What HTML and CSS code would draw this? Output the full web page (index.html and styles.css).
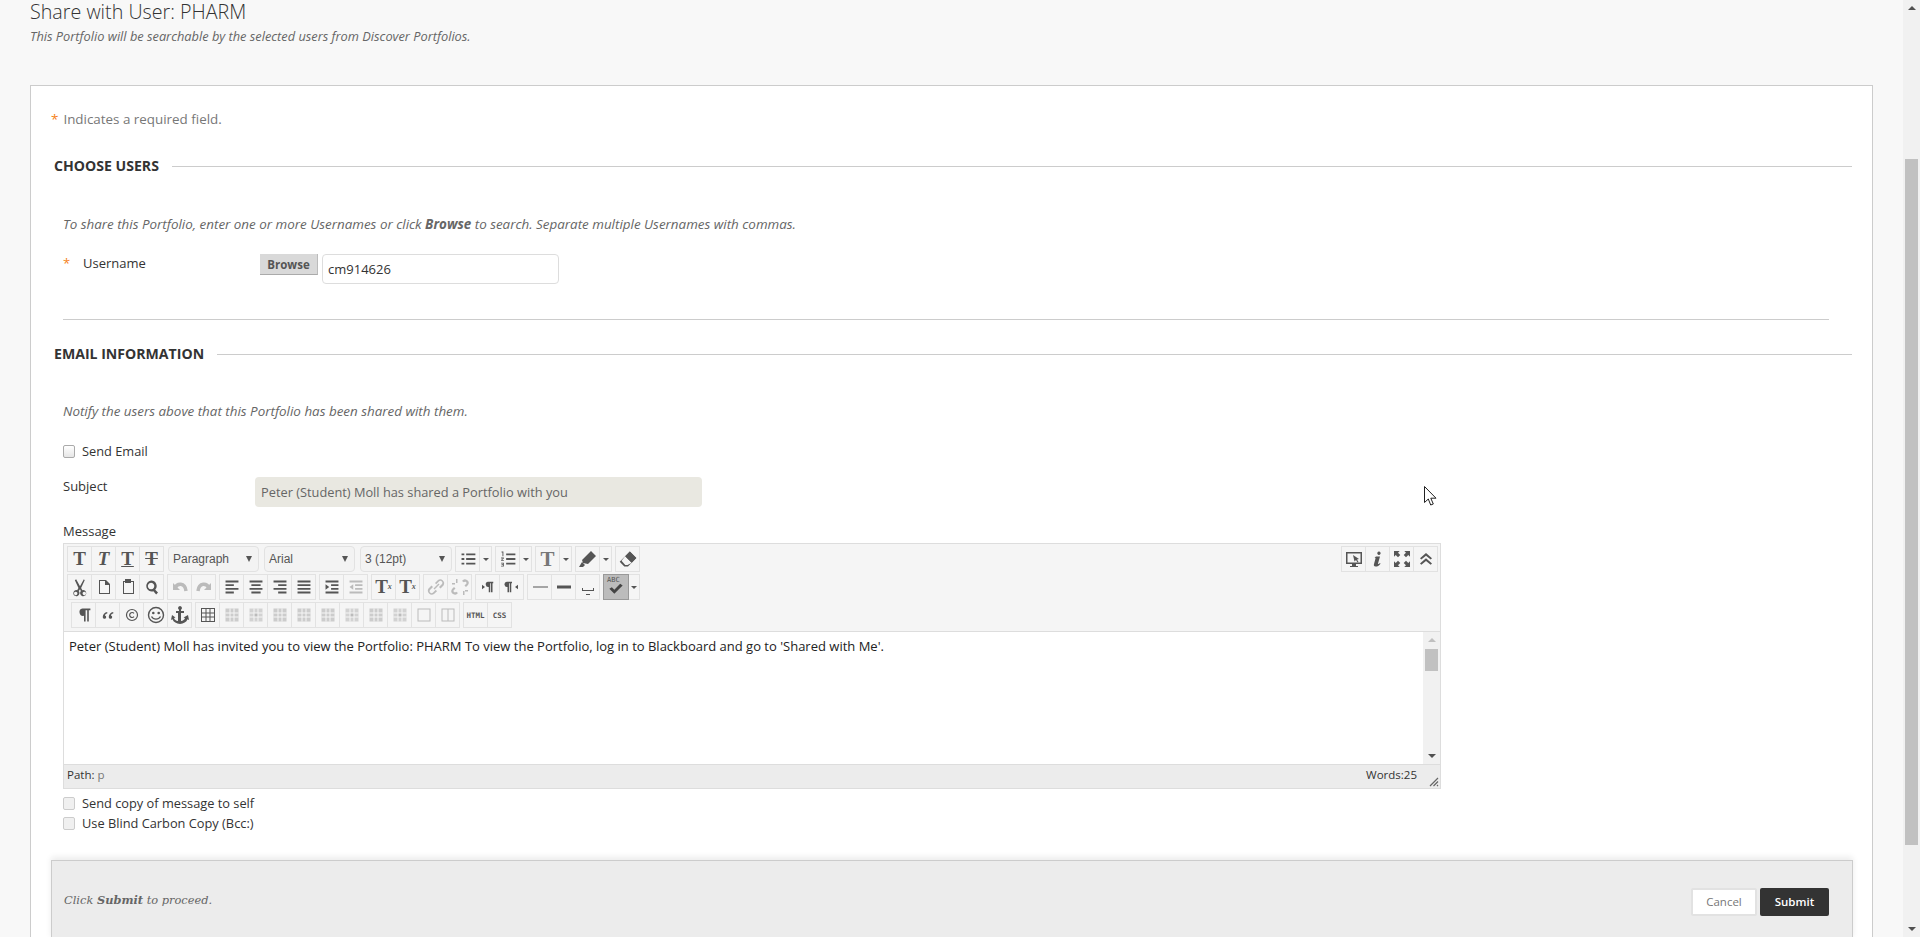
FILE: index.html
```html
<!DOCTYPE html>
<html lang="en">
<head>
<meta charset="utf-8">
<title>Share with User: PHARM</title>
<link rel="stylesheet" href="styles.css">
</head>
<body>
<svg class="defs" width="0" height="0" aria-hidden="true">
  <symbol id="i-bul" viewBox="-1 -1 26 26"><path d="M5 6h3v2H5zM5 11h3v2H5zM5 16h3v2H5zM10 6h10v2H10zM10 11h10v2H10zM10 16h10v2H10z"/></symbol>
  <symbol id="i-num" viewBox="-1 -1 26 26"><path d="M5 4h2v5H6V5H5zM4.500 10.500h3v1l-2 1.500h2v1h-3v-1l2-1.500h-2zM4.500 16h3v4h-3v-.8h2v-.8h-1.500v-.8h1.500v-.8h-2zM10 6h10v2H10zM10 11h10v2H10zM10 16h10v2H10z"/></symbol>
  <symbol id="i-pen" viewBox="0 0 24 24"><path d="M15 4l5 5-8 8-5-1-1-3zM6 15l3 3-2 2H3z"/></symbol>
  <symbol id="i-era" viewBox="-1 -1 26 26"><path d="M14 4l7 7-5 5-7-7z"/><path d="M14 4l7 7-9 9H8l-5-5zM9 9l-4 5 4 4.500h2.500L16 16z" fill-rule="evenodd"/></symbol>
  <symbol id="i-cut" viewBox="-2 -2 28 28"><path d="M7.500 3l4.500 8 4.500-8 1 1-4.200 9.300 1.500 2.400a3.600 3.600 0 1 1-1.800 1.100L12 14.500l-1.500 2.300a3.600 3.600 0 1 1-1.800-1.100l1.500-2.400L6 4zM7 17.500a2 2 0 1 0 .01 0zM17 17.500a2 2 0 1 0 .01 0z" fill-rule="evenodd"/></symbol>
  <symbol id="i-doc" viewBox="0 0 24 24"><path d="M7 5h7l4 4v10H7zM8 6v12h9V10h-4V6z" fill-rule="evenodd"/></symbol>
  <symbol id="i-pst" viewBox="0 0 24 24"><path d="M9 4h6v2h3v13H7V6h2zM8 7v11h9V7h-2v1H9V7z" fill-rule="evenodd"/></symbol>
  <symbol id="i-fnd" viewBox="-1 -1 26 26"><path d="M11 5a6 6 0 0 1 4.500 10l3 3-2 2-3-3.300A6 6 0 1 1 11 5zm0 2.500a3.500 3.500 0 1 0 .01 0z" fill-rule="evenodd"/></symbol>
  <symbol id="i-und" viewBox="0 0 24 24"><path d="M5 8v7h7z"/><path d="M7 13c2-5 10-6 11 3" fill="none" stroke="currentColor" stroke-width="3.500"/></symbol>
  <symbol id="i-red" viewBox="0 0 24 24"><path d="M19 8v7h-7z"/><path d="M17 13c-2-5-10-6-11 3" fill="none" stroke="currentColor" stroke-width="3.500"/></symbol>
  <symbol id="i-al" viewBox="-1 -1 26 26"><path d="M5 5h14v2H5zM5 9h9v2H5zM5 13h14v2H5zM5 17h9v2H5z"/></symbol>
  <symbol id="i-ac" viewBox="-1 -1 26 26"><path d="M5 5h14v2H5zM7 9h10v2H7zM5 13h14v2H5zM7 17h10v2H7z"/></symbol>
  <symbol id="i-ar" viewBox="-1 -1 26 26"><path d="M5 5h14v2H5zM10 9h9v2h-9zM5 13h14v2H5zM10 17h9v2h-9z"/></symbol>
  <symbol id="i-aj" viewBox="-1 -1 26 26"><path d="M5 5h14v2H5zM5 9h14v2H5zM5 13h14v2H5zM5 17h14v2H5z"/></symbol>
  <symbol id="i-ind" viewBox="-1 -1 26 26"><path d="M5 5h14v2H5zM11 9h8v2h-8zM11 13h8v2h-8zM5 17h14v2H5zM5 9l4 3-4 3z"/></symbol>
  <symbol id="i-out" viewBox="-1 -1 26 26"><path d="M5 5h14v2H5zM11 9h8v2h-8zM11 13h8v2h-8zM5 17h14v2H5zM9 9l-4 3 4 3z"/></symbol>
  <symbol id="i-lnk" viewBox="0 0 24 24"><path d="M14 5a4 4 0 0 1 5.500 5.500l-3 3-1.500-1.500 3-3a2 2 0 0 0-2.800-2.800l-3 3L11 8zM10 19a4 4 0 0 1-5.500-5.500l3-3L9 12l-3 3a2 2 0 0 0 2.800 2.800l3-3 1.200 1.500zM9.500 13.500l5-5 1 1-5 5z"/></symbol>
  <symbol id="i-unl" viewBox="0 0 24 24"><path d="M14 6a3.500 3.500 0 0 1 6 4l-2 2-1.500-1.500 2-2a1.500 1.500 0 0 0-2.600-1.300zM10 18a3.500 3.500 0 0 1-6-4l2-2 1.500 1.500-2 2a1.500 1.500 0 0 0 2.600 1.300zM8 4h1.500v4H8zM4 8h3v1.500H4zM15 16h1.500v4H15zM17 15h3v1.500h-3z"/></symbol>
  <symbol id="i-ltr" viewBox="-4 -4 32 32"><path d="M12 5h7v2h-1v12h-2V7h-1v12h-2v-7a3.500 3.500 0 0 1 -1-7zM4 9l4 3-4 3z"/></symbol>
  <symbol id="i-rtl" viewBox="-4 -4 32 32"><path d="M5 5h7v2h-1v12H9V7H8v12H6v-7a3.500 3.500 0 0 1-1-7zM20 9l-4 3 4 3z"/></symbol>
  <symbol id="i-hr1" viewBox="0 0 24 24"><path d="M5 11.500h15v1H5z"/></symbol>
  <symbol id="i-hr2" viewBox="0 0 24 24"><path d="M5 10.500h14v3H5z"/></symbol>
  <symbol id="i-sp" viewBox="0 0 24 24"><path d="M6 13h1v2h10v-2h1v3H6zM10 19h4v1h-4z"/></symbol>
  <symbol id="i-chk" viewBox="0 0 24 24"><path d="M4 13l3-2 3 3 7-7 3 2-10 10z"/></symbol>
  <symbol id="i-pil" viewBox="-3 -3 30 30"><path d="M10 4h10v2h-2v14h-2V6h-2v14h-2v-7a4.500 4.500 0 0 1 -2-9z"/></symbol>
  <symbol id="i-quo" viewBox="-4 -4 32 32"><path d="M11 8v2c-2 .5-3 1.500-3 2.500a2.300 2.300 0 1 1-3 2c0-3 2.500-6 6-6.500zM19 8v2c-2 .5-3 1.500-3 2.500a2.300 2.300 0 1 1-3 2c0-3 2.500-6 6-6.500z"/></symbol>
  <symbol id="i-cop" viewBox="0 0 24 24"><circle cx="12" cy="12" r="5.500" fill="none" stroke="currentColor" stroke-width="1.200"/><path d="M14 10.300a2.500 2.500 0 1 0 0 3.400" fill="none" stroke="currentColor" stroke-width="1.200"/></symbol>
  <symbol id="i-smi" viewBox="0 0 24 24"><circle cx="12" cy="12" r="7.500" fill="none" stroke="currentColor" stroke-width="1.400"/><circle cx="9.300" cy="10" r="1.300"/><circle cx="14.700" cy="10" r="1.300"/><path d="M7.500 13.500c2 3.500 7 3.500 9 0" fill="none" stroke="currentColor" stroke-width="1.400"/></symbol>
  <symbol id="i-anc" viewBox="0 0 24 24"><path d="M12 3a2 2 0 0 1 1 3.700V8h3v2h-3v8c2-.2 3.500-1.200 4-3l-1.500-.5L20 12l1 5-1.500-.7C18.500 19 15.500 21 12 21s-6.500-2-7.500-4.700L3 17l1-5 3.500 2.500L6 15c.5 1.800 2 2.800 4 3v-8H8V8h3V6.700A2 2 0 0 1 12 3z"/></symbol>
  <symbol id="i-tbl" viewBox="0 0 24 24"><path d="M5 5h14v14H5zM6 6v3.500h3.500V6zM10.500 6v3.500H13.500V6zM14.500 6v3.500H18V6zM6 10.500v3h3.500v-3zM10.500 10.500v3H13.500v-3zM14.500 10.500v3H18v-3zM6 14.500V18h3.500v-3.500zM10.500 14.500V18H13.500v-3.500zM14.500 14.500V18H18v-3.500z" fill-rule="evenodd"/></symbol>
  <symbol id="i-tb2" viewBox="0 0 24 24"><path d="M5.500 5.500h13v13h-13z" opacity=".7"/><path d="M5.500 9.500h13v1h-13zM5.500 13.500h13v1h-13zM9.500 5.500h1v13h-1zM13.500 5.500h1v13h-1z" fill="#f5f5f5"/></symbol>
  <symbol id="i-tb3" viewBox="0 0 24 24"><path d="M5.500 5.500h13v13h-13z" opacity=".6"/><path d="M10 10h4v4h-4z"/><path d="M5.500 9.500h13v1h-13zM5.500 13.500h13v1h-13zM9.500 5.500h1v13h-1zM13.500 5.500h1v13h-1z" fill="#f5f5f5"/></symbol>
  <symbol id="i-tb4" viewBox="0 0 24 24"><path d="M5.500 5.500h13v13h-13zM6.500 6.500v11h11v-11z" fill-rule="evenodd"/></symbol>
  <symbol id="i-tb5" viewBox="0 0 24 24"><path d="M5.500 5.500h13v13h-13zM6.500 6.500v11h5v-11zM12.500 6.500v11h5v-11z" fill-rule="evenodd"/></symbol>
  <symbol id="i-mon" viewBox="0 0 24 24"><path d="M4 5h16v12h-6v2h2v1H8v-1h2v-2H4zM5.500 6.500v9h13v-9z" fill-rule="evenodd"/><path d="M11 8l6 4-2 .5 1.500 2.500-1 .5-1.500-2.500-1.500 1.500z"/></symbol>
  <symbol id="i-inf" viewBox="0 0 24 24"><path d="M13 4.500a1.700 1.700 0 1 1-.1 0zM10 9.500h4l-2 7c0 1 1 .5 2-.5l.5.700c-1.500 2-3 2.800-5 2.800-1.500 0-2-1-1.500-2.500l1.500-5.500c0-.7-.5-.7-1-.7z"/></symbol>
  <symbol id="i-ful" viewBox="1.500 1.500 21 21"><path d="M5 5h5L8.500 6.500l2 2-2 2-2-2L5 10zM19 5v5l-1.500-1.500-2 2-2-2 2-2L14 5zM5 19v-5l1.500 1.500 2-2 2 2-2 2L10 19zM19 19h-5l1.500-1.500-2-2 2-2 2 2L19 14z"/></symbol>
  <symbol id="i-col" viewBox="-4 -4 32 32"><path d="M12 4l8 7-1.800 1.500L12 7.500l-6.200 5L4 11zM12 11l8 7-1.800 1.500L12 14.500l-6.200 5L4 18z"/></symbol>
</svg>

<div class="page">
  <main class="main">
    <h1 class="title">Share with User: PHARM</h1>
    <p class="subtitle">This Portfolio will be searchable by the selected users from Discover Portfolios.</p>

    <form class="panel">
      <p class="required"><span class="star">*</span>Indicates a required field.</p>

      <h2 class="section section-first"><span>CHOOSE USERS</span></h2>
      <p class="hint">To share this Portfolio, enter one or more Usernames or click <b>Browse</b> to search. Separate multiple Usernames with commas.</p>
      <div class="user-row">
        <span class="star star-field">*</span>
        <label class="user-label">Username</label>
        <button type="button" class="browse">Browse</button>
        <input class="user-input" type="text" value="cm914626">
      </div>
      <hr class="rule">

      <h2 class="section section-second"><span>EMAIL INFORMATION</span></h2>
      <p class="hint hint-second">Notify the users above that this Portfolio has been shared with them.</p>
      <label class="check check-send"><span class="box"></span>Send Email</label>
      <div class="subject-row">
        <label class="subject-label">Subject</label>
        <div class="subject-input">Peter (Student) Moll has shared a Portfolio with you</div>
      </div>
      <div class="message-label">Message</div>

      <div class="editor">
        <div class="toolbar">
          <div class="tb-row">
            <div class="grp">
              <span class="b g-t t-b">T</span><span class="b g-t t-i">T</span><span class="b g-t t-u">T</span><span class="b g-t t-s">T</span>
            </div>
            <span class="sel">Paragraph<i class="arrow"></i></span>
            <span class="sel">Arial<i class="arrow"></i></span>
            <span class="sel sel-size">3 (12pt)<i class="arrow"></i></span>
            <div class="grp"><span class="b"><svg><use href="#i-bul"/></svg></span><span class="split"><i class="arrow arrow-s"></i></span></div>
            <div class="grp"><span class="b"><svg><use href="#i-num"/></svg></span><span class="split"><i class="arrow arrow-s"></i></span></div>
            <div class="grp"><span class="b g-t t-b t-big">T</span><span class="split"><i class="arrow arrow-s"></i></span></div>
            <div class="grp"><span class="b"><svg><use href="#i-pen"/></svg></span><span class="split"><i class="arrow arrow-s"></i></span></div>
            <div class="grp"><span class="b"><svg><use href="#i-era"/></svg></span></div>
            <div class="grp grp-end">
              <span class="b"><svg><use href="#i-mon"/></svg></span><span class="b"><svg><use href="#i-inf"/></svg></span><span class="b"><svg><use href="#i-ful"/></svg></span><span class="b"><svg><use href="#i-col"/></svg></span>
            </div>
          </div>
          <div class="tb-row">
            <div class="grp">
              <span class="b"><svg><use href="#i-cut"/></svg></span><span class="b"><svg><use href="#i-doc"/></svg></span><span class="b"><svg><use href="#i-pst"/></svg></span><span class="b"><svg><use href="#i-fnd"/></svg></span>
            </div>
            <div class="grp">
              <span class="b off"><svg><use href="#i-und"/></svg></span><span class="b off"><svg><use href="#i-red"/></svg></span>
            </div>
            <div class="grp">
              <span class="b"><svg><use href="#i-al"/></svg></span><span class="b"><svg><use href="#i-ac"/></svg></span><span class="b"><svg><use href="#i-ar"/></svg></span><span class="b"><svg><use href="#i-aj"/></svg></span>
            </div>
            <div class="grp">
              <span class="b"><svg><use href="#i-ind"/></svg></span><span class="b off"><svg><use href="#i-out"/></svg></span>
            </div>
            <div class="grp">
              <span class="b g-t t-b t-sc">T<sup>x</sup></span><span class="b g-t t-b t-sc">T<sub>x</sub></span>
            </div>
            <div class="grp">
              <span class="b off"><svg><use href="#i-lnk"/></svg></span><span class="b off"><svg><use href="#i-unl"/></svg></span>
            </div>
            <div class="grp">
              <span class="b"><svg><use href="#i-ltr"/></svg></span><span class="b"><svg><use href="#i-rtl"/></svg></span>
            </div>
            <div class="grp">
              <span class="b"><svg><use href="#i-hr1"/></svg></span><span class="b"><svg><use href="#i-hr2"/></svg></span><span class="b"><svg><use href="#i-sp"/></svg></span>
            </div>
            <div class="grp grp-spell">
              <span class="b b-on"><em class="abc">ABC</em><svg><use href="#i-chk"/></svg></span><span class="split"><i class="arrow arrow-s"></i></span>
            </div>
          </div>
          <div class="tb-row tb-row-in">
            <div class="grp">
              <span class="b"><svg><use href="#i-pil"/></svg></span><span class="b"><svg><use href="#i-quo"/></svg></span><span class="b"><svg><use href="#i-cop"/></svg></span><span class="b"><svg><use href="#i-smi"/></svg></span><span class="b"><svg><use href="#i-anc"/></svg></span>
            </div>
            <div class="grp">
              <span class="b"><svg><use href="#i-tbl"/></svg></span><span class="b off"><svg><use href="#i-tb2"/></svg></span><span class="b off"><svg><use href="#i-tb3"/></svg></span><span class="b off"><svg><use href="#i-tb2"/></svg></span><span class="b off"><svg><use href="#i-tb2"/></svg></span><span class="b off"><svg><use href="#i-tb2"/></svg></span><span class="b off"><svg><use href="#i-tb3"/></svg></span><span class="b off"><svg><use href="#i-tb2"/></svg></span><span class="b off"><svg><use href="#i-tb3"/></svg></span><span class="b off"><svg><use href="#i-tb4"/></svg></span><span class="b off"><svg><use href="#i-tb5"/></svg></span>
            </div>
            <div class="grp">
              <span class="b code">HTML</span><span class="b code">CSS</span>
            </div>
          </div>
        </div>
        <div class="edit-area">
          <div class="edit-text">Peter (Student) Moll has invited you to view the Portfolio: PHARM To view the Portfolio, log in to Blackboard and go to 'Shared with Me'.</div>
          <div class="scroll scroll-small">
            <i class="tri tri-up tri-light"></i>
            <div class="thumb thumb-small"></div>
            <i class="tri tri-down"></i>
          </div>
        </div>
        <div class="status">
          <span class="path">Path: <span class="path-p">p</span></span>
          <span class="words">Words:25</span>
          <svg class="grip" viewBox="0 0 12 12"><path d="M11 3L3 11M11 6.500L6.500 11M11 10l-1 1" stroke="#666" stroke-width="1.200" fill="none"/></svg>
        </div>
      </div>

      <label class="check check-copy"><span class="box box-off"></span>Send copy of message to self</label>
      <label class="check"><span class="box box-off"></span>Use Blind Carbon Copy (Bcc:)</label>

      <div class="submit-bar">
        <p class="submit-note">Click <b>Submit</b> to proceed.</p>
        <div class="submit-actions">
          <button type="button" class="btn-cancel">Cancel</button>
          <button type="button" class="btn-submit">Submit</button>
        </div>
      </div>
    </form>
  </main>

  <div class="scroll scroll-page">
    <i class="tri tri-up"></i>
    <div class="thumb thumb-page"></div>
    <i class="tri tri-down"></i>
  </div>
</div>

<svg class="cursor" viewBox="0 0 13 20" width="13" height="20" aria-hidden="true"><path d="M.5.500v16l3.800-3.500 2.400 6 2.600-1-2.500-5.800h5.200z" fill="#fff" stroke="#222" stroke-width="1"/></svg>
</body>
</html>
```
FILE: styles.css
```css
* { box-sizing: border-box; }
html, body { margin: 0; height: 937px; overflow: hidden; }
body {
  background: #f8f8f8;
  font-family: "Open Sans", sans-serif;
  font-size: 13px;
  color: #333;
}
.defs { position: absolute; }
.page { display: flex; height: 937px; }
.main { flex: 1; min-width: 0; padding: 0 30px; height: 937px; overflow: hidden; }

.title { margin: 0; font-size: 19.700px; font-weight: 300; line-height: 24px; color: #333; }
.subtitle { margin: 3px 0 0; font-size: 12.800px; font-style: italic; line-height: 18px; color: #666; }

.panel {
  margin-top: 40px;
  padding: 23px 19px 0 20px;
  background: #fff;
  border: 1px solid #ccc;
  height: 900px;
}
.required { margin: 0; line-height: 20px; font-size: 13.400px; color: #777; }
.star { color: #f58220; margin-right: 5px; }

.section {
  display: flex;
  align-items: center;
  margin: 0 1px 0 3px;
  font-size: 14.100px;
  font-weight: 700;
  line-height: 20px;
  color: #333;
}
.section::after { content: ""; flex: 1; height: 1px; background: #ccc; margin-left: 13px; }
.section-first { margin-top: 27px; }
.section-second { margin-top: 24px; }

.hint { margin: 38px 0 0 12px; font-size: 13.400px; font-style: italic; line-height: 20px; color: #666; }
.hint-second { margin-top: 37px; }

.user-row { display: flex; align-items: flex-start; margin: 20px 0 0 12px; height: 30px; }
.star-field { font-size: 13px; line-height: 18px; margin-right: 0; width: 20px; }
.user-label { width: 177px; line-height: 18px; font-size: 13px; color: #333; }
.browse {
  width: 58px; height: 21px; padding: 0;
  border: 0; border-bottom: 1px solid #aaa; border-right: 1px solid #bbb;
  background: #d9d9d9;
  font: 700 11.500px "Open Sans", sans-serif;
  color: #555;
}
.user-input {
  margin-left: 4px; width: 237px; height: 30px; padding: 0 5px;
  border: 1px solid #ddd; border-radius: 4px; background: #fff;
  font: 13px "Open Sans", sans-serif; color: #333;
}
.rule { margin: 35px 24px 0 12px; border: 0; height: 1px; background: #ccc; }

.check { display: flex; align-items: center; height: 20px; margin-left: 12px; font-size: 12.800px; line-height: 20px; color: #333; }
.check-send { margin-top: 20px; }
.check-copy { margin-top: 4px; }
.box {
  width: 12px; height: 13px; margin-right: 7px;
  border: 1px solid #aaa; border-radius: 2px;
  background: linear-gradient(#fff, #e6e6e6);
}
.box-off { border-color: #ccc; background: #f0f0f0; }

.subject-row { display: flex; align-items: flex-start; margin: 16px 0 0 12px; height: 30px; }
.subject-label { width: 192px; line-height: 18px; font-size: 13px; color: #333; }
.subject-input {
  width: 447px; height: 30px; padding: 5px 6px 0;
  background: #e9e8e1; border-radius: 4px;
  font-size: 12.800px; line-height: 20px; color: #666;
}
.message-label { margin: 14px 0 0 12px; height: 20px; font-size: 13px; line-height: 20px; color: #333; }

.editor { width: 1378px; margin: 2px 0 0 12px; border: 1px solid #ddd; }
.toolbar { height: 88px; padding: 2px 2px 0 3px; background: #f5f5f5; border-bottom: 1px solid #ddd; }
.tb-row { display: flex; gap: 3px; height: 28px; }
.tb-row-in { padding-left: 4px; }
.grp { display: flex; height: 26px; border: 1px solid #e2e2e2; }
.grp-end { margin-left: auto; }
.grp-spell { border: 0; }
.b {
  display: flex; align-items: center; justify-content: center;
  position: relative;
  width: 24px; height: 24px;
  color: #555;
  border-right: 1px solid #e2e2e2;
}
.b:last-child { width: 23px; border-right: 0; }
.b svg { width: 24px; height: 24px; flex: none; fill: currentColor; display: block; }
.off { color: #bbb; }
.split { display: flex; align-items: center; justify-content: center; width: 11px; height: 24px; }
.grp-spell .split { height: 26px; border: 1px solid #e2e2e2; border-left: 0; }
.b-on { width: 26px; height: 26px; background: #bcbcbc; border: 1px solid #999; color: #444; }
.b-on svg { position: absolute; left: 2px; top: 3px; width: 20px; height: 20px; }
.abc { position: absolute; left: 3px; top: 1px; font: 7px/8px "DejaVu Sans Mono", monospace; color: #555; }

.g-t { font-family: "Liberation Serif", serif; font-size: 19px; line-height: 24px; }
.t-b { font-weight: 700; }
.t-i { font-style: italic; font-weight: 700; }
.t-u { font-weight: 700; text-decoration: underline; }
.t-s { font-weight: 700; text-decoration: line-through; }
.t-big { font-size: 21px; color: #777; }
.t-sc sup, .t-sc sub { font-size: 8px; line-height: 0; font-style: italic; }

.sel {
  display: flex; align-items: center; justify-content: space-between;
  width: 91px; height: 26px; margin: 0 1px; padding: 0 6px 0 4px;
  border: 1px solid #e2e2e2; border-radius: 4px;
  background: #f3f3f3;
  font: 12px "Liberation Sans", sans-serif; color: #555;
}
.sel-size { width: 92px; margin-right: 0; }
.arrow { width: 0; height: 0; border-left: 3.500px solid transparent; border-right: 3.500px solid transparent; border-top: 6px solid #555; }
.arrow-s { border-left-width: 3px; border-right-width: 3px; border-top-width: 3px; }
.code { font: 700 7.500px "DejaVu Sans Mono", monospace; color: #555; }

.edit-area { display: flex; height: 132px; background: #fff; }
.edit-text { flex: 1; padding: 5px 5px; font-size: 13px; line-height: 18px; color: #222; }

.scroll { display: flex; flex-direction: column; align-items: center; background: #f1f1f1; flex: none; }
.scroll-small { width: 17px; height: 132px; padding: 6px 0; }
.scroll-page { width: 17px; height: 937px; padding: 6px 0; }
.tri { display: block; width: 0; height: 0; border-left: 4px solid transparent; border-right: 4px solid transparent; flex: none; }
.tri-up { border-bottom: 4px solid #505050; }
.tri-light { border-bottom-color: #c0c0c0; }
.tri-down { border-top: 4px solid #505050; margin-top: auto; }
.thumb { width: 13px; background: #c1c1c1; flex: none; }
.thumb-small { height: 22px; margin-top: 7px; }
.thumb-page { height: 686px; margin-top: 149px; }

.status {
  display: flex; align-items: center;
  position: relative;
  height: 24px; padding: 0 23px 4px 3px;
  background: #ececec;
  border-top: 1px solid #ddd;
  font-size: 11.500px; color: #333;
}
.path { flex: 1; }
.path-p { color: #777; }
.grip { position: absolute; right: 1px; bottom: 1px; width: 12px; height: 12px; }

.submit-bar {
  display: flex; align-items: center; justify-content: space-between;
  margin-top: 27px; height: 80px; padding: 0 23px 0 12px;
  background: #ececec;
  border: 1px solid #ccc;
  box-shadow: 0 -3px 6px rgba(0, 0, 0, .08);
}
.submit-note { margin: 0; font: italic 11.400px "DejaVu Serif", serif; color: #666; }
.submit-actions { display: flex; gap: 3px; margin-top: 3px; }
.btn-cancel {
  width: 66px; height: 28px; padding: 0;
  background: #fff; border: 2px solid #e2e2e2; border-radius: 2px;
  font: 11.500px "Open Sans", sans-serif; color: #777;
}
.btn-submit {
  width: 69px; height: 28px; padding: 0;
  background: #333; border: 0; border-radius: 2px;
  font: 600 11.500px "Open Sans", sans-serif; color: #fff;
}

.cursor { position: absolute; left: 1424px; top: 486px; }
```
